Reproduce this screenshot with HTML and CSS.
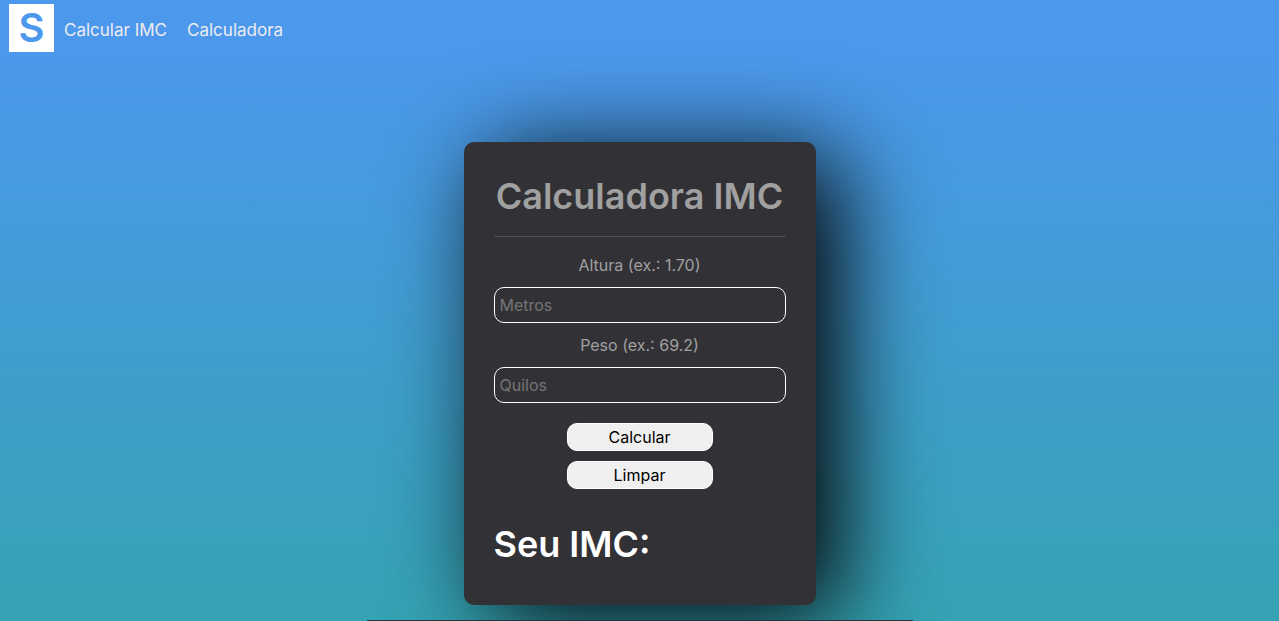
FILE: index.html
```html
<!DOCTYPE html>
<html lang="pt-BR">
<head>
  <meta charset="utf-8">
  <meta name="viewport" content="width=device-width, initial-scale=1">
  <title>Calculadora IMC</title>
  <link rel="stylesheet" href="styles.css">
</head>
<body>
  <nav class="navbar">
    <a class="brand" href="#">S</a>
    <a class="nav-link" href="#imc">Calcular IMC</a>
    <a class="nav-link" href="#calculadora">Calculadora</a>
  </nav>
  <main class="content">
    <section class="card" id="imc">
      <h1 class="title">Calculadora IMC</h1>
      <form class="form">
        <label class="label" for="altura">Altura (ex.: 1.70)</label>
        <input class="field" id="altura" type="text" placeholder="Metros">
        <label class="label" for="peso">Peso (ex.: 69.2)</label>
        <input class="field" id="peso" type="text" placeholder="Quilos">
        <div class="actions">
          <button class="button" type="button">Calcular</button>
          <button class="button" type="reset">Limpar</button>
        </div>
      </form>
      <h2 class="result">Seu IMC:</h2>
    </section>
    <section class="panel" id="calculadora"></section>
  </main>
</body>
</html>
```
FILE: styles.css
```css
* {
  box-sizing: border-box;
}

body {
  display: flex;
  flex-direction: column;
  margin: 0;
  min-height: 100vh;
  font-family: Inter, "Liberation Sans", sans-serif;
  font-size: 16px;
  line-height: 24px;
  color: #a0a0a0;
  background: linear-gradient(#4c98ec 56px, #35a3b3);
}

.navbar {
  display: flex;
  align-items: center;
  gap: 10px;
  padding: 4px 9px;
}

.brand {
  width: 45px;
  background: #fff;
  color: #4c98ec;
  font-size: 40px;
  font-weight: 600;
  line-height: 48px;
  text-align: center;
  text-decoration: none;
}

.nav-link {
  padding: 4px 10px 0 0;
  color: #ececf0;
  font-size: 17px;
  text-decoration: none;
}

.content {
  display: flex;
  flex: 1;
  flex-direction: column;
  align-items: center;
  gap: 15px;
  padding-top: 86px;
}

.card {
  width: 352px;
  padding: 30px;
  border-radius: 10px;
  background: #323236;
  box-shadow: 24px 14px 96px #000;
}

.panel {
  flex: 1;
  width: 100%;
  max-width: 546px;
  border-radius: 10px 10px 0 0;
  background: #1b363c;
}

.title,
.result {
  margin: 0;
  font-size: 36px;
  font-weight: 600;
  line-height: 48px;
  white-space: nowrap;
}

.title {
  padding-bottom: 16px;
  border-bottom: 1px solid #4d4d50;
  text-align: center;
}

.result {
  padding: 31px 0 7px;
  color: #fff;
}

.form {
  display: flex;
  flex-direction: column;
  gap: 10px;
  padding-top: 16px;
}

.label {
  text-align: center;
}

.field {
  width: 100%;
  height: 36px;
  padding: 0 5px;
  border: 1px solid #fff;
  border-radius: 10px;
  background: transparent;
  color: #fff;
  font: inherit;
}

.field::placeholder {
  color: #757575;
}

.actions {
  display: flex;
  flex-direction: column;
  align-items: center;
  gap: 10px;
  padding-top: 10px;
}

.button {
  width: 50%;
  height: 28px;
  padding: 0;
  border: 1px solid #fff;
  border-radius: 10px;
  background: #efefef;
  color: #000;
  font: inherit;
}
```
